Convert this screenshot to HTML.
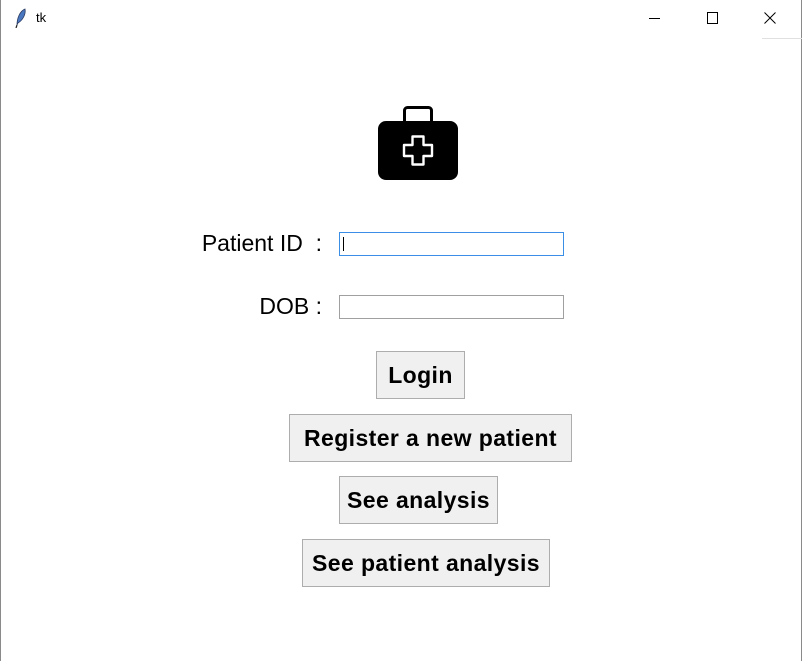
<!DOCTYPE html>
<html><head><meta charset="utf-8"><style>
html,body{margin:0;padding:0;}
body{width:802px;height:661px;background:#fff;position:relative;overflow:hidden;font-family:"Liberation Sans",Arial,sans-serif;}
.frame{position:absolute;left:0;top:0;width:800px;height:661px;border-left:1px solid #8a8a8a;border-right:1px solid #8a8a8a;}
.t{position:absolute;}
.btn{position:absolute;box-sizing:border-box;background:#f0f0f0;border:1px solid #adadad;display:flex;align-items:center;justify-content:center;font-weight:bold;font-size:23px;letter-spacing:0.4px;color:#000;white-space:nowrap;}
.ent{position:absolute;box-sizing:border-box;background:#fff;}
.lab{position:absolute;font-size:23px;color:#000;white-space:pre;text-align:right;}
</style></head><body>
<div class="frame"></div>
<svg class="t" style="left:14px;top:8px" width="14" height="20" viewBox="0 0 14 20"><path d="M3 17 C3 10 6 3 11 1 C12 6 9 12 4 15 Z" fill="#4a78c0" stroke="#2a3a60" stroke-width="0.8"/><path d="M3 17 L2 20" stroke="#222" stroke-width="1.2"/></svg>
<div class="t" style="left:36px;top:10px;font-size:13px;">tk</div>
<div class="t" style="left:649px;top:18px;width:11px;height:1px;background:#000"></div>
<div class="t" style="left:707px;top:12px;width:9px;height:10px;border:1px solid #000"></div>
<svg class="t" style="left:764px;top:12px" width="12" height="12"><path d="M0.5 0.5 L11.5 11.5 M11.5 0.5 L0.5 11.5" stroke="#000" stroke-width="1"/></svg>
<div class="t" style="left:762px;top:38px;width:40px;height:1px;background:#e0e0e0"></div>

<svg class="t" style="left:376px;top:104px" width="84" height="78" viewBox="0 0 84 78">
<rect x="28.5" y="3.5" width="27" height="18" rx="3" fill="none" stroke="#000" stroke-width="3"/>
<rect x="2" y="17" width="80" height="59" rx="8" fill="#000"/>
<path d="M36.5 32.5 h11 v8.5 h8.5 v11 h-8.5 v8.5 h-11 v-8.5 h-8.5 v-11 h8.5 z" fill="none" stroke="#fff" stroke-width="2.4" stroke-linejoin="round"/>
</svg>

<div class="lab" style="right:480px;top:230px;">Patient ID  :</div>
<div class="ent" style="left:339px;top:232px;width:225px;height:24px;border:1px solid #3a8ee6;"><div style="position:absolute;left:3px;top:4px;width:1px;height:14px;background:#000"></div></div>
<div class="lab" style="right:480px;top:293px;">DOB :</div>
<div class="ent" style="left:339px;top:295px;width:225px;height:24px;border:1px solid #a0a0a0;"></div>

<div class="btn" style="left:376px;top:351px;width:89px;height:48px;">Login</div>
<div class="btn" style="left:289px;top:414px;width:283px;height:48px;">Register a new patient</div>
<div class="btn" style="left:339px;top:476px;width:159px;height:48px;">See analysis</div>
<div class="btn" style="left:302px;top:539px;width:248px;height:48px;">See patient analysis</div>
</body></html>
